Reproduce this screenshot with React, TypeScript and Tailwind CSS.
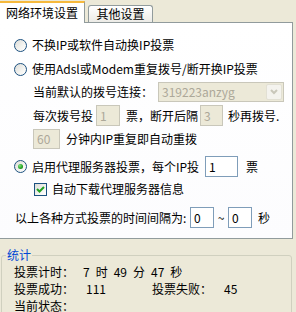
import type { ReactNode } from "react";

function Radio({ checked = false }: { checked?: boolean }) {
  return (
    <span className="flex h-[13px] w-[13px] shrink-0 items-center justify-center rounded-full border border-[#1c5180] bg-[linear-gradient(135deg,#dcdcd7_0%,#f4f4f1_60%,#ffffff_100%)]">
      {checked && (
        <span className="h-[5px] w-[5px] rounded-full bg-[radial-gradient(circle_at_35%_35%,#7ee07e_0%,#21a121_60%,#137013_100%)]" />
      )}
    </span>
  );
}

function Checkbox() {
  return (
    <span className="flex h-[13px] w-[13px] shrink-0 items-center justify-center border border-[#1c5180] bg-[linear-gradient(135deg,#dcdcd7_0%,#f4f4f1_60%,#ffffff_100%)]">
      <svg width="9" height="9" viewBox="0 0 9 9">
        <polyline points="1,4 3.5,6.5 8,2" fill="none" stroke="#21a121" strokeWidth="2" />
      </svg>
    </span>
  );
}

function Field({ value, disabled = false, className }: { value: string; disabled?: boolean; className: string }) {
  return (
    <span
      className={`flex shrink-0 items-center pl-[3px] ${
        disabled
          ? "border border-[#c9c7ba] bg-[#ece9d8] text-[#aca899]"
          : "border border-[#7f9db9] bg-white text-black"
      } ${className}`}
    >
      {value}
    </span>
  );
}

function Row({ children, className }: { children: ReactNode; className: string }) {
  return <div className={`flex items-center leading-[16px] ${className}`}>{children}</div>;
}

export default function App() {
  return (
    <div className="h-[312px] w-[296px] overflow-hidden bg-[#ece9d8] font-['Noto_Sans_CJK_SC',sans-serif] text-[12px] text-black">
      {/* Tabs */}
      <div className="flex h-[22px] items-end">
        <div className="relative z-10 -mb-px flex h-[22px] w-[85px] items-center border-r border-t-2 border-r-[#919b9c] border-t-[#f6b93d] bg-white pl-[6px] leading-[16px]">
          网络环境设置
        </div>
        <div className="ml-[3px] flex h-[17px] w-[65px] items-center justify-center rounded-t-[3px] border border-b-0 border-[#919b9c] bg-[linear-gradient(#ffffff,#ecebe6)] leading-[16px]">
          其他设置
        </div>
      </div>

      {/* Tab page */}
      <div className="flex h-[217px] w-[293px] flex-col border-y border-r border-[#919b9c] bg-[linear-gradient(#ffffff,#fcfcfe)]">
        <Row className="mt-[14px] h-[16px] pl-[14px]">
          <Radio />
          <span className="ml-[5px]">不换IP或软件自动换IP投票</span>
        </Row>
        <Row className="mt-[8px] h-[16px] pl-[14px]">
          <Radio />
          <span className="ml-[5px]">使用Adsl或Modem重复拨号/断开换IP投票</span>
        </Row>
        <Row className="mt-[5px] h-[20px] pl-[33px]">
          <span className="w-[125px]">当前默认的拨号连接：</span>
          <span className="flex h-[20px] w-[126px] items-center justify-between border border-[#c9c7ba] bg-[#ece9d8] pl-[3px] pr-[1px] text-[#aca899]">
            319223anzyg
            <span className="flex h-[16px] w-[16px] items-center justify-center rounded-[2px] border border-[#e2e0d4] bg-[#f4f3ee]">
              <svg width="8" height="6" viewBox="0 0 8 6">
                <polyline points="1,1 4,4 7,1" fill="none" stroke="#c9c7ba" strokeWidth="2" />
              </svg>
            </span>
          </span>
        </Row>
        <Row className="mt-[3px] h-[21px] pl-[33px]">
          <span className="w-[63px]">每次拨号投</span>
          <Field value="1" disabled className="h-[21px] w-[24px]" />
          <span className="ml-[6px] w-[74px]">票，断开后隔</span>
          <Field value="3" disabled className="h-[21px] w-[23px]" />
          <span className="ml-[5px]">秒再拨号.</span>
        </Row>
        <Row className="mt-[3px] h-[20px] pl-[33px]">
          <Field value="60" disabled className="h-[20px] w-[27px]" />
          <span className="ml-[6px]">分钟内IP重复即自动重拨</span>
        </Row>
        <Row className="mt-[7px] h-[21px] pl-[14px]">
          <Radio checked />
          <span className="ml-[5px] w-[173px]">启用代理服务器投票，每个IP投</span>
          <Field value="1" className="h-[21px] w-[33px]" />
          <span className="ml-[8px]">票</span>
        </Row>
        <Row className="mt-[5px] h-[14px] pl-[34px]">
          <Checkbox />
          <span className="ml-[5px]">自动下载代理服务器信息</span>
        </Row>
        <Row className="mt-[11px] h-[21px] pl-[15px]">
          <span className="w-[175px]">以上各种方式投票的时间间隔为:</span>
          <Field value="0" className="h-[21px] w-[24px]" />
          <span className="w-[14px] text-center">~</span>
          <Field value="0" className="h-[21px] w-[24px]" />
          <span className="ml-[6px]">秒</span>
        </Row>
      </div>

      {/* Statistics group */}
      <fieldset className="ml-[1px] mt-[8px] w-[291px] rounded-[3px] border border-[#d0d0bf] pb-[8px]">
        <legend className="ml-[4px] px-[1px] leading-[16px] text-[#0046d5]">统计</legend>
        <div className="flex flex-col pl-[12px] leading-[17px]">
          <div className="flex">
            <span className="w-[69px]">投票计时：</span>
            <span>7</span>
            <span className="ml-[6px]">时</span>
            <span className="ml-[6px]">49</span>
            <span className="ml-[6px]">分</span>
            <span className="ml-[6px]">47</span>
            <span className="ml-[6px]">秒</span>
          </div>
          <div className="flex">
            <span className="w-[72px]">投票成功：</span>
            <span className="w-[66px]">111</span>
            <span className="w-[72px]">投票失败：</span>
            <span>45</span>
          </div>
          <div className="flex">
            <span>当前状态：</span>
          </div>
        </div>
      </fieldset>
    </div>
  );
}
